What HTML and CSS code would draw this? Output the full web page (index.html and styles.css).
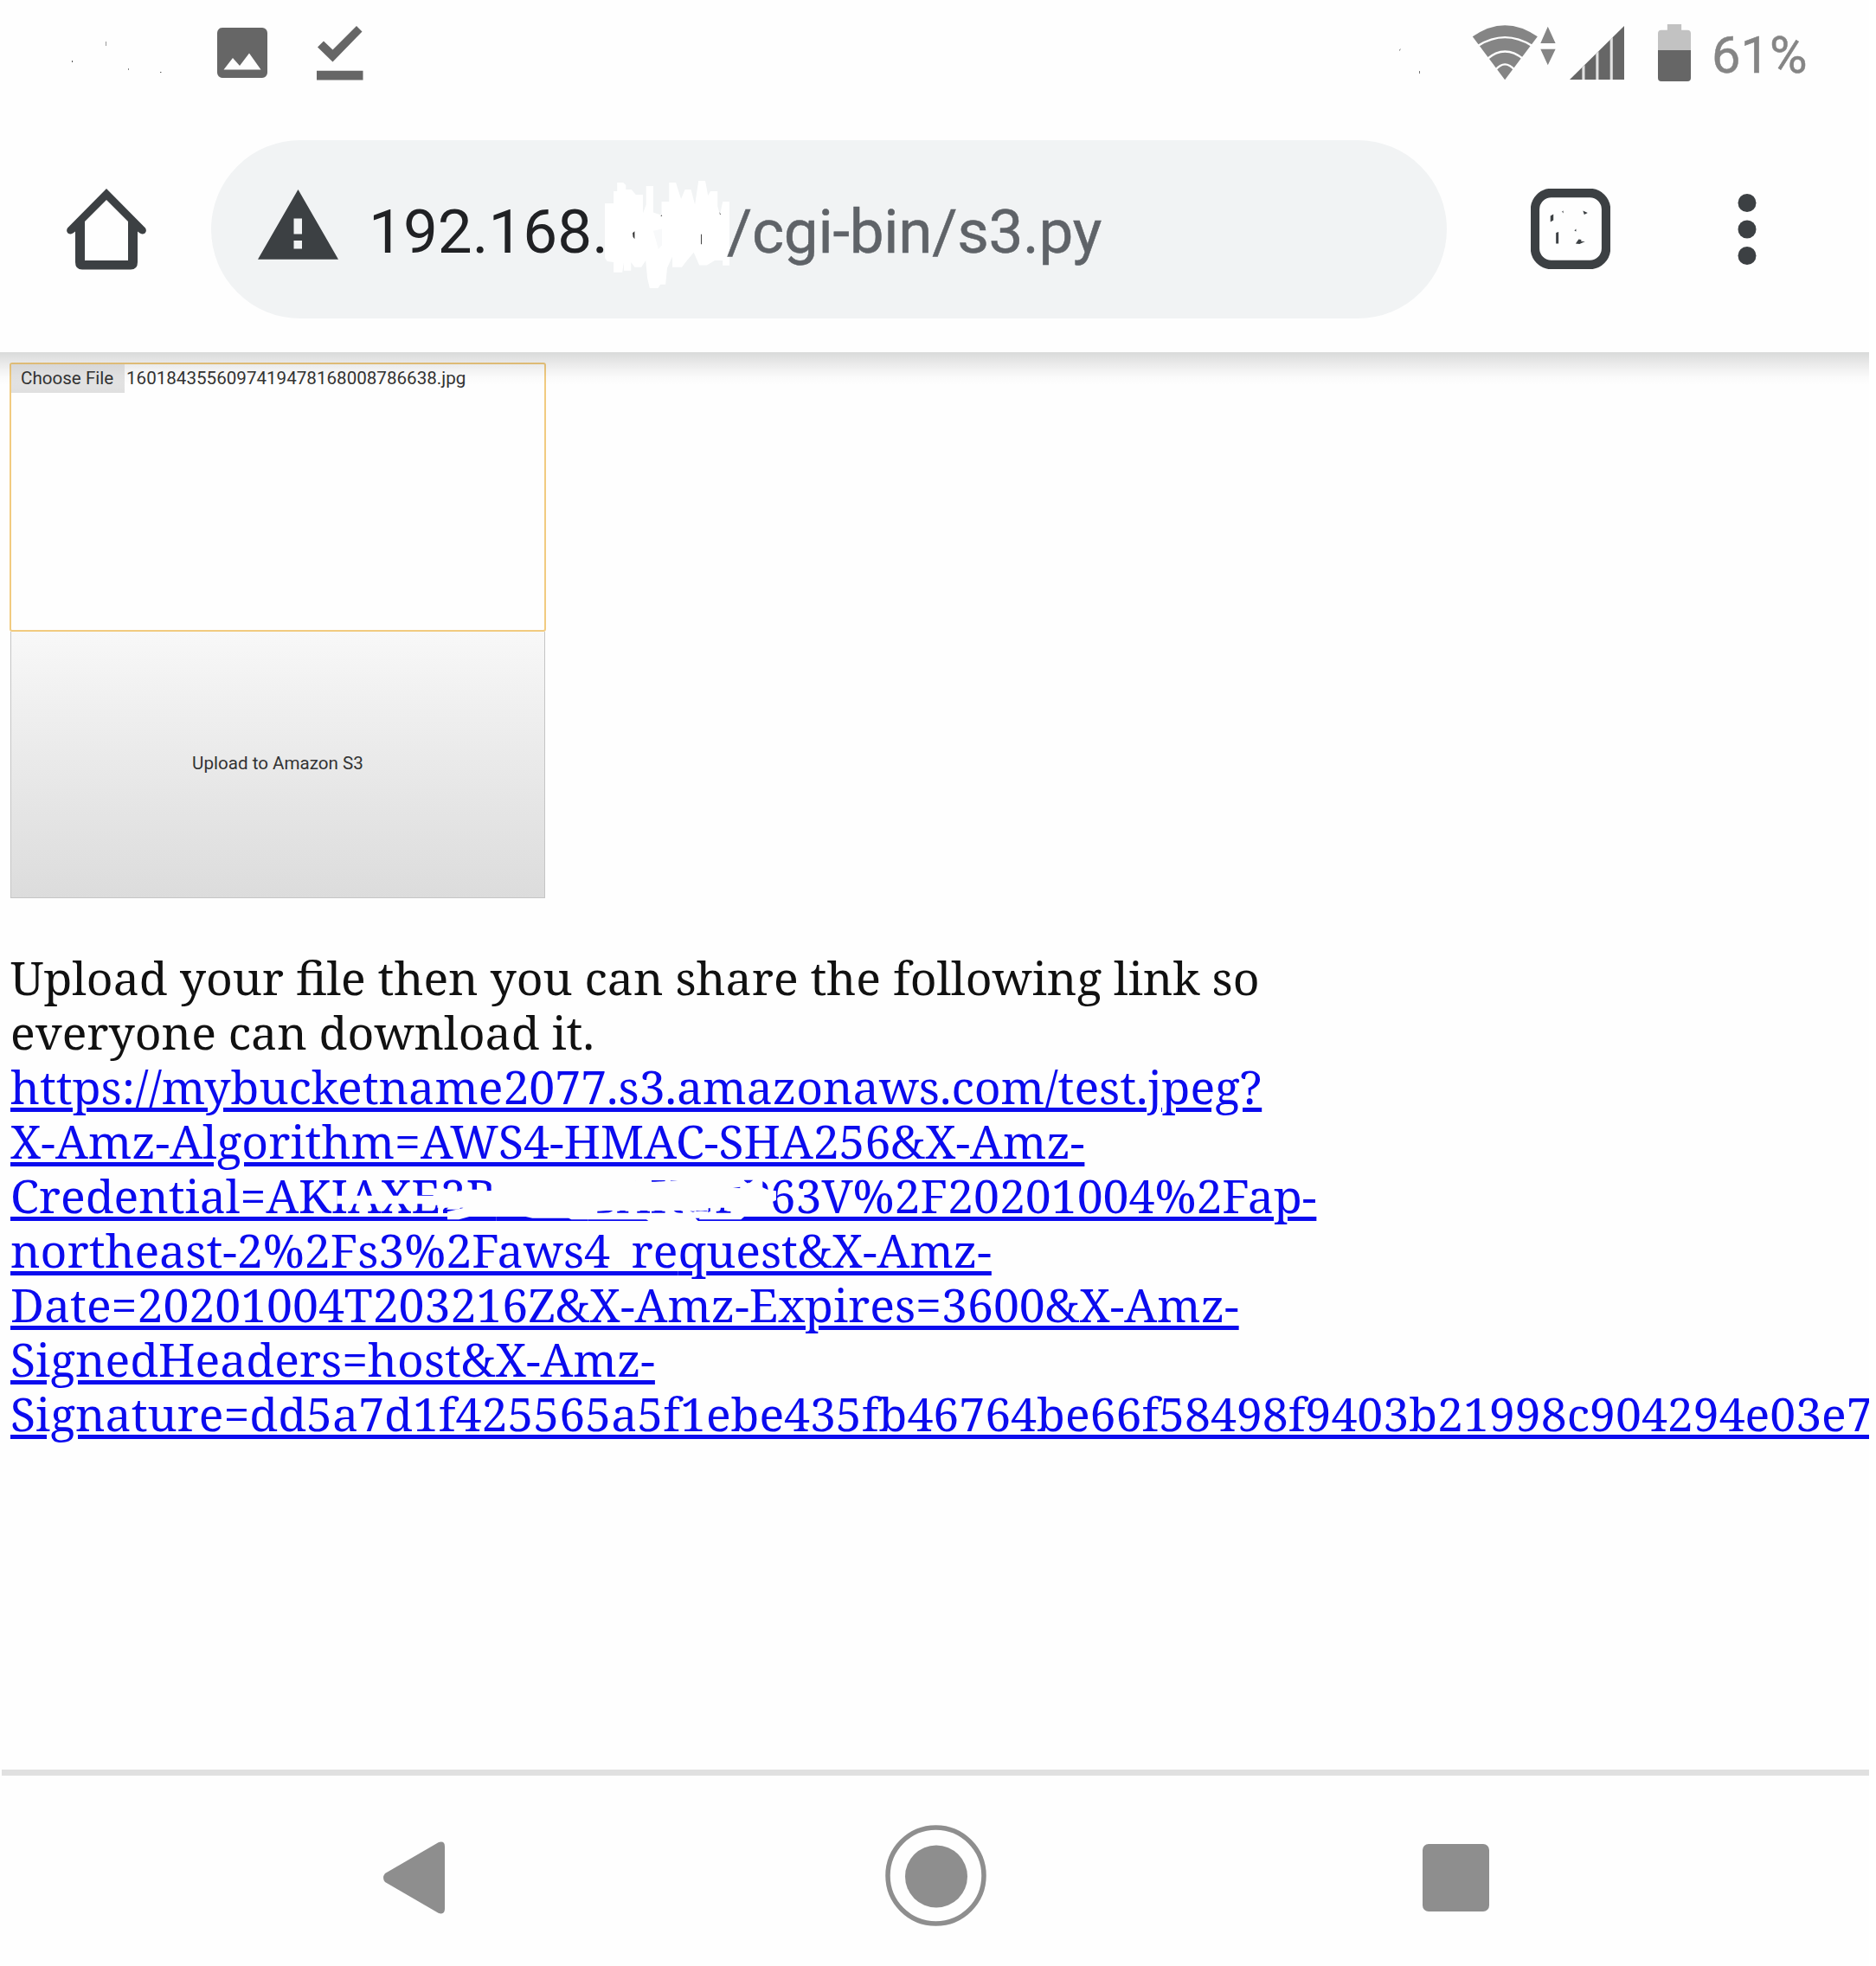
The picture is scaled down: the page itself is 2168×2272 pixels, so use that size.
FILE: index.html
```html
<!DOCTYPE html>
<html lang="en">
<head>
<meta charset="utf-8">
<title>s3.py</title>
<link rel="stylesheet" href="styles.css">
</head>
<body>
<div class="phone">
  <header class="status">
    <svg class="specks-left" viewBox="83 40 104 50"><path fill="#555" d="M83 70h1v2h-1zM122 48h.6v5h-.6zM148 79h.7v2h-.7zM185 83h1.4v1h-1.4z"/></svg>
    <svg class="ic-image" viewBox="251 32 58 58"><path fill="#666" fill-rule="evenodd" d="M257.500 32H303a6 6 0 0 1 6 6V84a6 6 0 0 1-6 6H257a6 6 0 0 1-6-6V38a6 6 0 0 1 6-6zM258.500 80.500H301.500L288 61.500 277 76 269 67z"/></svg>
    <svg class="ic-done" viewBox="366 30 54 63"><path fill="#666" d="M367 54.500 374 47.500 384.500 57.500 412 30 418.500 36.500 384.500 71.500zM366 81.700H419.500V92.600H366z"/></svg>
    <span class="spacer"></span>
    <svg class="specks-right" viewBox="1618 40 25 50"><path fill="#666" d="M1618 58l1.500-2v1l-1 2zM1641 82h.9v3h-.9z"/></svg>
    <svg class="ic-wifi" viewBox="362 82 252 195" preserveAspectRatio="none">
      <path fill="#858585" d="M364 125Q461 46 559 125L461 275z"/>
      <path fill="none" stroke="#fefefe" stroke-width="7" d="M380 157Q461 98 543 157M407 203Q461 150 517 203M433 240Q461 202 490 240"/>
      <path fill="#858585" d="M590 90 568 148H613zM568 168H613L590 224z"/>
    </svg>
    <svg class="ic-signal" viewBox="655 90 162 186" preserveAspectRatio="none">
      <path fill="#666" d="M655 276 817 90V276z"/>
      <path fill="#e2e2e2" d="M692 234 700 225V276H692zM733 187 741 178V276H733zM775 138 783 129V276H775z"/>
    </svg>
    <svg class="ic-battery" viewBox="918 84 98 198" preserveAspectRatio="none">
      <path fill="#c2c2c2" d="M946 84H988V104H1006Q1016 104 1016 116V174H918V116Q918 104 928 104H946z"/>
      <path fill="#666" d="M918 174H1016V270Q1016 282 1006 282H928Q918 282 918 270z"/>
    </svg>
    <span class="percent">61%</span>
  </header>

  <div class="toolbar">
    <svg class="ic-home" viewBox="77 218 92 94"><path fill="#3c4043" fill-rule="evenodd" d="M123 218 168 263.500Q170 267 167.500 269.500Q164 271.500 161 269L159 267.500V303Q159 311.500 151 311.500H95Q87 311.500 87 303V267.500L85 269Q82 271.500 78.500 269.500Q76 267 78 263.500zM123 231 98 256V301H148V256z"/></svg>
    <div class="omnibox">
      <svg class="ic-warning" viewBox="298 219 93 81"><path fill="#3c4043" fill-rule="evenodd" d="M344.500 219 391 299.700H298zM339.500 252.500V270.500H349V252.500zM339.500 278V287.600H349V278z"/></svg>
      <span class="host">192.168.</span>
      <svg class="scribble" viewBox="128 207 314 373" preserveAspectRatio="none">
        <path fill="#fff" d="M128 285H150V243H159V213H174L181 222V237H195L206 255H224V320L232 290V225H250V317L271 326V279H290V213H307L320 270L330 237H345L355 290L364 207H381L388 258L394 243H412V295L418 325L425 279H442V501H425V484H405L385 500H366L352 456L335 484L322 507H298V470L285 510L281 567H268L262 580H241L235 545L231 484L220 507H203L194 490V519H176V490L172 525H150V490L134 487L128 475z"/>
        <path fill="#f8f9fa" d="M250 381 272 374V430L263 445z"/>
        <path fill="#333" d="M198 388 203 382V409L199 402zM370 393H372V427H370zM417 315 420 324H418zM268 328 272 326V330z"/>
      </svg>
      <span class="path">/cgi-bin/s3.py</span>
    </div>
    <svg class="ic-tabs" viewBox="1772 218.500 93 93" preserveAspectRatio="none">
      <rect x="1777" y="223.500" width="83" height="83" rx="19" fill="none" stroke="#3c4043" stroke-width="10.400"/>
      <path fill="#3c4043" d="M1795 250 1798.500 248V255L1795 257zM1801.500 269.500 1804.500 268.500V282H1801.500zM1808.500 245 1810 244V247zM1833 244 1838.500 246.500 1834.500 248.500zM1823 267 1825 265V268zM1824.500 282 1828 277 1831 277.500V279.500H1835.500L1829 282.500zM1820 248 1822 246.500z"/>
    </svg>
    <svg class="ic-menu" viewBox="0 0 22 82"><g fill="#3c4043"><circle cx="11" cy="10.500" r="10.500"/><circle cx="11" cy="41" r="10.500"/><circle cx="11" cy="71.500" r="10.500"/></g></svg>
  </div>

  <main class="page">
    <div class="form">
      <div class="file"><span class="choose">Choose File</span><span class="filename">1601843556097419478168008786638.jpg</span></div>
      <div class="upload">Upload to Amazon S3</div>
    </div>
    <div class="message">
      <div class="line">Upload your file then you can share the following link so</div>
      <div class="line">everyone can download it.</div>
      <a class="link">
        <span class="line">https://mybucketname2077.s3.amazonaws.com/test.jpeg?</span>
        <span class="line">X-Amz-Algorithm=AWS4-HMAC-SHA256&amp;X-Amz-</span>
        <span class="line">Credential=AKIAXE2B<span class="gap">&nbsp;&nbsp;&nbsp;&nbsp;&nbsp;&nbsp;&nbsp;&nbsp;</span>BAKGFP63V%2F20201004%2Fap-</span>
        <span class="line solid">northeast-2%2Fs3%2Faws4_re<span class="skip">q</span>uest&amp;X-Amz-</span>
        <span class="line">Date=20201004T203216Z&amp;X-Amz-Expires=3600&amp;X-Amz-</span>
        <span class="line">SignedHeaders=host&amp;X-Amz-</span>
        <span class="line">Signature=dd5a7d1f425565a5f1ebe435fb46764be66f58498f9403b21998c904294e03e7</span>
      </a>
      <svg class="eraser" viewBox="-280 50 1540 170"><path fill="#fefefe" d="M-273 124H75L110 118 150 108 190 109V103H216V109L262 107V80H270V55H610V70H760L780 76H830L900 72 970 66 1060 66 1135 68 1150 82 1172 66V50H1203V96L1222 104 1250 108V140L1238 145V185L1142 195 1128 207H982L985 202H970L980 213H808L800 207H540L530 202H405L365 193H200L150 207H110V180L168 166H75V153H-273zM630 178V184H955L975 176H1010L1016 184H1095V178L1070 176V166H1040L1015 168V178H960L940 176H650z" fill-rule="evenodd"/><path fill="#1212ee" d="M1100 97 1125 94V98zM1138 70H1170L1158 80z"/></svg>
    </div>
  </main>

  <nav class="nav">
    <svg class="ic-back" viewBox="0 0 72 84"><path fill="#8e8e8e" d="M2 37 64 1Q71-1 71 6V78Q71 85 64 83L2 47Q-2 42 2 37z"/></svg>
    <svg class="ic-circle" viewBox="0 0 117 117"><circle cx="58.500" cy="58.500" r="55.500" fill="none" stroke="#8e8e8e" stroke-width="5.500"/><circle cx="59" cy="59.500" r="36" fill="#8e8e8e"/></svg>
    <span class="ic-recent"></span>
  </nav>
</div>
</body>
</html>
```
FILE: styles.css
```css
* { box-sizing: border-box; }
body { margin: 0; background: #fff; }
svg { display: block; flex: none; }
.phone {
  width: 2160px; height: 2272px; overflow: hidden; background: #fefefe;
  display: flex; flex-direction: column;
  font-family: Roboto, sans-serif;
}

.status { height: 122px; flex: none; display: flex; align-items: center; padding: 0 70px 0 83px; }
.spacer { flex: 1; }
.specks-left { width: 104px; height: 50px; margin: 8px 64px 0 0; }
.ic-image { width: 58px; height: 58px; margin-right: 57px; }
.ic-done { width: 54px; height: 63px; }
.specks-right { width: 25px; height: 50px; margin: 8px 59px 0 0; }
.ic-wifi { width: 97px; height: 65px; margin: -1px 16px 0 0; }
.ic-signal { width: 63px; height: 62px; margin-right: 39px; }
.ic-battery { width: 38px; height: 66px; margin-right: 24px; }
.percent { width: 112px; font-size: 59.500px; line-height: 64px; color: #858585; padding-top: 5px; white-space: nowrap; -webkit-text-stroke: .5px #858585; }

.toolbar {
  height: 285px; flex: none; display: flex; align-items: center;
  padding-left: 77px; position: relative; z-index: 2;
}
.toolbar::after {
  content: ""; position: absolute; left: 0; right: 0; top: 100%; height: 38px;
  background: linear-gradient(rgba(0,8,5,.145), rgba(0,0,0,.07) 40%, rgba(0,0,0,.015) 75%, rgba(0,0,0,0));
}
.ic-home { width: 92px; height: 94px; margin-right: 75px; }
.omnibox {
  width: 1428px; height: 206px; border-radius: 103px; background: #f1f3f4;
  display: flex; align-items: center; padding-left: 54px; margin-right: 97px; flex: none;
  font-size: 71px; line-height: 84px; white-space: nowrap;
}
.ic-warning { width: 93px; height: 81px; margin: -11px 35px 0 0; }
.host { color: #202124; width: 273px; padding-top: 7px; }
.scribble { width: 144px; height: 124px; margin-top: 12px; }
.path { color: #5f6368; padding-top: 7px; letter-spacing: -.3px; margin-left: -3px; -webkit-text-stroke: .5px #5f6368; }
.ic-tabs { width: 92px; height: 93px; margin-right: 147px; }
.ic-menu { width: 22px; height: 82px; }

.page { flex: 1; padding: 12px 0 0 12px; overflow: hidden; }
.form { width: 618px; font-size: 20.600px; line-height: 24px; color: #333; }
.file { height: 311px; margin: 0 -1px; border: 2px solid #f1cb80; border-radius: 3px; display: flex; align-items: flex-start; }
.choose {
  width: 131px; height: 33px; padding: 4px 0 0 11px;
  background: linear-gradient(#e8e8e8, #dfdfdf); white-space: nowrap;
}
.filename { padding: 4px 0 0 2px; white-space: nowrap; }
.upload {
  height: 308px; border: 1px solid #c5c5c5; border-top: 0; padding-bottom: 3px;
  background: linear-gradient(#f8f8f8, #ececec 40%, #dcdcdc);
  display: flex; align-items: center; justify-content: center;
}

.message {
  position: relative; margin-top: 60px; color: #111;
  font-family: "Noto Serif", "DejaVu Serif Condensed", "DejaVu Serif", serif;
  font-size: 53.540px; line-height: 63.050px;
}
.line { display: block; width: max-content; white-space: nowrap; }
.link { display: block; color: #0b0bee; }
.link .line { text-decoration: underline; text-decoration-thickness: 4.500px; text-underline-offset: 4px; }
.link .solid { text-decoration-skip-ink: none; }
.skip { text-decoration-skip-ink: auto; }
.gap { letter-spacing: -.7px; }
.eraser { position: absolute; left: 374.700px; top: 258.700px; width: 513.300px; height: 56.700px; }

.nav { height: 227px; flex: none; border-top: 7px solid #e0e0e0; margin-left: 2px; display: flex; align-items: center; padding: 15px 0 0 441px; }
.ic-back { width: 72px; height: 84px; margin-right: 508px; }
.ic-circle { width: 117px; height: 117px; margin: -4px 504px 0 0; }
.ic-recent { width: 77px; height: 78px; border-radius: 7px; background: #8e8e8e; }
```
